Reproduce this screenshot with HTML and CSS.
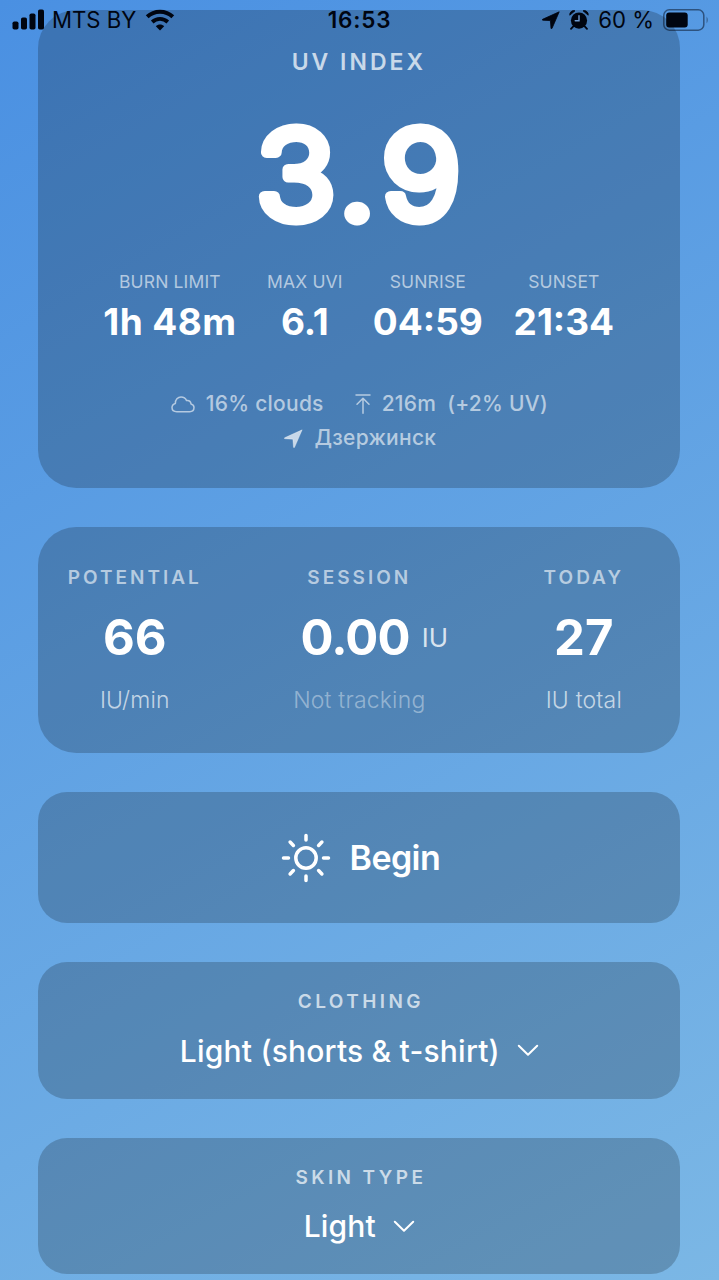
FILE: index.html
```html
<!DOCTYPE html>
<html lang="en">
<head>
<meta charset="utf-8">
<title>UV Index</title>
<link rel="stylesheet" href="styles.css">
</head>
<body>
<main class="screen">
  <header class="status">
    <div class="status-left">
      <svg class="signal" viewBox="0 0 33 21" width="33" height="21"><rect x="0.5" y="12.5" width="6" height="8" rx="1.8"/><rect x="9" y="8.5" width="6" height="12" rx="1.8"/><rect x="17.5" y="4.5" width="6" height="16" rx="1.8"/><rect x="26" y="0.5" width="6" height="20" rx="1.8"/></svg>
      <span class="carrier">MTS BY</span>
      <svg class="wifi" viewBox="0 0 30 22" width="30" height="22"><path d="M2.2 7.8C9.3 0.9 20.7 0.9 27.8 7.8" fill="none" stroke="#000510" stroke-width="4"/><path d="M7.2 13C11.7 8.9 18.3 8.9 22.8 13" fill="none" stroke="#000510" stroke-width="3.8"/><path d="M10.8 17.2C13 14.9 17 14.9 19.2 17.2L15 21.4Z"/></svg>
    </div>
    <span class="clock">16:53</span>
    <div class="status-right">
      <svg class="loc" viewBox="0 0 18 18" width="18" height="18"><path d="M17.2 0.8L0.6 8.3Q-0.2 8.9 0.8 9.2L8.4 9.6L9 17.3Q9.4 18.2 10 17.4Z" stroke="#000510" stroke-width=".8" stroke-linejoin="round"/></svg>
      <svg class="alarm" viewBox="0 0 20 20" width="20" height="20"><circle cx="10" cy="10.6" r="8.1"/><path d="M0.8 5.2A4 4 0 0 1 6 0.8ZM19.2 5.2A4 4 0 0 0 14 0.8Z" stroke="#000510" stroke-width=".8"/><path d="M4.3 16.3L2 18.8M15.7 16.3L18 18.8" stroke="#000510" stroke-width="1.8" stroke-linecap="round"/><path d="M10 5.8V10.8H6.2" fill="none" stroke="#6f9bd0" stroke-width="1.4" stroke-linecap="round"/></svg>
      <span class="percent">60 %</span>
      <svg class="battery" viewBox="0 0 46 22" width="46" height="22"><rect x="0.8" y="0.8" width="40" height="20.4" rx="5.5" fill="none" stroke="#000510" stroke-opacity=".48" stroke-width="1.5"/><rect x="3.2" y="3.5" width="21.5" height="15" rx="3"/><path d="M43.7 7.6Q45.6 11 43.7 14.6Z" fill-opacity=".5"/></svg>
    </div>
  </header>

  <section class="card uv">
    <h1 class="uv-title">UV INDEX</h1>
    <svg class="uv-value" viewBox="0 0 220 120" width="220" height="120"><text transform="scale(1.08 1)" x="43.4 100 159.4" y="102.5" text-anchor="middle">3.9</text></svg>
    <div class="stats">
      <div class="stat"><span class="stat-label">BURN LIMIT</span><span class="stat-value spaced">1h 48m</span></div>
      <div class="stat"><span class="stat-label">MAX UVI</span><span class="stat-value">6.1</span></div>
      <div class="stat"><span class="stat-label">SUNRISE</span><span class="stat-value">04:59</span></div>
      <div class="stat"><span class="stat-label">SUNSET</span><span class="stat-value">21:34</span></div>
    </div>
    <div class="meta">
      <svg class="cloud" viewBox="0 0 24 17" width="24" height="17"><path d="M5.8 15.7C2.9 15.7 1 13.9 1 11.6C1 9.5 2.4 7.9 4.4 7.4C4.2 3.7 6.8 1 10 1C12.6 1 14.6 2.3 15.6 4.6C18 4.3 19.7 5.6 20 7.9C21.9 8.4 23 9.8 23 11.6C23 14 21.2 15.7 18.7 15.7Z"/></svg>
      <span class="clouds">16% clouds</span>
      <svg class="altitude" viewBox="0 0 16 20" width="16" height="20"><path d="M1 1H15M8 19.2V4.5M2 10.3L8 4.3L14 10.3"/></svg>
      <span class="metres">216m</span>
      <span class="boost">(+2% UV)</span>
    </div>
    <div class="place">
      <svg class="place-arrow" viewBox="0 0 18 18" width="19" height="19"><path d="M17.2 0.8L0.6 8.3Q-0.2 8.9 0.8 9.2L8.4 9.6L9 17.3Q9.4 18.2 10 17.4Z"/></svg>
      <span class="city">Дзержинск</span>
    </div>
  </section>

  <section class="card totals">
    <div class="total"><span class="label">POTENTIAL</span><span class="number">66</span><span class="unit">IU/min</span></div>
    <div class="total"><span class="label">SESSION</span><div class="number-row"><span class="number tight">0.00</span><span class="suffix">IU</span></div><span class="unit faint">Not tracking</span></div>
    <div class="total"><span class="label">TODAY</span><span class="number">27</span><span class="unit">IU total</span></div>
  </section>

  <section class="card begin">
    <svg class="sun" viewBox="0 0 50 50" width="50" height="50"><circle cx="25" cy="25" r="10.2"/><path d="M25 2.5V7M25 43V47.5M2.5 25H7.5M42.5 25H47.5M9.1 9.1L12.4 12.4M37.6 37.6L40.9 40.9M9.1 40.9L12.4 37.6M37.6 12.4L40.9 9.1"/></svg>
    <span class="begin-text">Begin</span>
  </section>

  <section class="card picker">
    <span class="label">CLOTHING</span>
    <div class="choice"><span>Light (shorts &amp; t-shirt)</span><svg class="chevron" viewBox="0 0 22 13" width="22" height="13"><path d="M1.8 1.8L11 10.8L20.2 1.8"/></svg></div>
  </section>

  <section class="card picker">
    <span class="label">SKIN TYPE</span>
    <div class="choice"><span>Light</span><svg class="chevron" viewBox="0 0 22 13" width="22" height="13"><path d="M1.8 1.8L11 10.8L20.2 1.8"/></svg></div>
  </section>
</main>
</body>
</html>
```
FILE: styles.css
```css
* { box-sizing: border-box; }
body { margin: 0; font-family: Inter, "Noto Sans", sans-serif; color: #fff; }
svg { display: block; flex: none; }
span, h1 { white-space: nowrap; }

.screen {
  position: relative;
  width: 719px;
  height: 1280px;
  overflow: hidden;
  padding: 10px 38.6px 0 38.3px;
  display: flex;
  flex-direction: column;
  gap: 39px;
  background: linear-gradient(150.7deg, #4a90e2, #7bb7e5);
}

/* Status bar floats over the scrolled content */
.status {
  position: absolute;
  inset: 0 0 auto 0;
  height: 39px;
  padding: 0 10px 0 12px;
  display: flex;
  justify-content: space-between;
  align-items: center;
  color: #000510;
  fill: #000510;
  font-size: 22.2px;
}
.status-left, .status-right { display: flex; align-items: center; }
.carrier { margin-left: 7px; }
.wifi { margin-left: 9px; }
.clock { position: absolute; left: 0; right: 0; text-align: center; font-size: 22.5px; font-weight: 600; letter-spacing: .8px; }
.percent { margin: 0 9px 0 9px; }
.alarm { margin-left: 9px; }

.card {
  flex: none;
  border-radius: 38px;
  background: rgba(0, 0, 0, .2);
  display: flex;
  flex-direction: column;
  align-items: center;
}

.uv { height: 478px; padding-top: 38px; }
.uv-title { margin: 0; padding-right: 1px; font-size: 23px; line-height: 28px; font-weight: 600; letter-spacing: 3px; color: rgba(255,255,255,.72); }
.uv-value { margin-top: 40px; overflow: visible; }
.uv-value text { font-size: 122px; font-weight: 300; fill: #fff; stroke: #fff; stroke-width: 11px; stroke-linejoin: round; }
.stats { margin-top: 36px; padding-right: 1px; display: grid; grid-template-columns: 133px 75px 109px 101px; gap: 31px; }
.stat { display: flex; flex-direction: column; align-items: center; }
.stat-label { font-size: 17.5px; line-height: 20px; letter-spacing: .15px; color: rgba(255,255,255,.6); }
.stat-value { margin-top: 8px; font-size: 37px; line-height: 44px; font-weight: 700; }
.spaced { letter-spacing: .4px; }

.meta, .place { display: flex; align-items: center; font-size: 21px; line-height: 26px; font-weight: 500; letter-spacing: .25px; color: rgba(255,255,255,.6); }
.meta { margin-top: 47px; }
.place { margin-top: 8px; padding-left: 1px; }
.cloud, .altitude { fill: none; stroke: rgba(255,255,255,.6); stroke-width: 1.5; stroke-linecap: round; stroke-linejoin: round; }
.clouds { margin-left: 11px; }
.altitude { margin-left: 31px; }
.metres { margin-left: 11px; }
.boost { margin-left: 11px; }
.place-arrow { fill: rgba(255,255,255,.7); stroke: rgba(255,255,255,.4); stroke-width: .8; }
.city { margin-left: 12px; }

.totals { height: 226px; padding: 39px 0 0 30.5px; display: grid; grid-template-columns: repeat(3, 132px); gap: 92.5px; align-items: start; }
.total { display: flex; flex-direction: column; align-items: center; }
.label { font-size: 19px; line-height: 24px; font-weight: 600; letter-spacing: 3px; color: rgba(255,255,255,.6); }
.number { margin-top: 18px; font-size: 49px; line-height: 60px; font-weight: 700; }
.tight { letter-spacing: -.8px; }
.number-row { display: flex; align-items: center; margin-right: -30px; }
.suffix { margin: 16px 0 0 12px; font-size: 26px; color: rgba(255,255,255,.8); }
.unit { margin-top: 18px; font-size: 23px; line-height: 28px; font-weight: 300; letter-spacing: .2px; color: rgba(255,255,255,.68); }
.faint { color: rgba(255,255,255,.4); }

.begin { height: 131px; padding-left: 2px; flex-direction: row; justify-content: center; border-radius: 29px; }
.sun { fill: none; stroke: #fff; stroke-width: 3.5; stroke-linecap: round; }
.begin-text { margin-left: 19px; font-size: 34px; font-weight: 600; letter-spacing: -.6px; }

.picker { height: 136.5px; padding-top: 28px; border-radius: 29px; }
.picker .label { padding-left: 3px; letter-spacing: 3.4px; color: rgba(255,255,255,.7); }
.choice { margin-top: 17.5px; display: flex; align-items: center; font-size: 30px; line-height: 38px; font-weight: 500; letter-spacing: .2px; }
.chevron { margin-left: 17px; fill: none; stroke: #fff; stroke-width: 2; stroke-linecap: round; stroke-linejoin: round; }
```
